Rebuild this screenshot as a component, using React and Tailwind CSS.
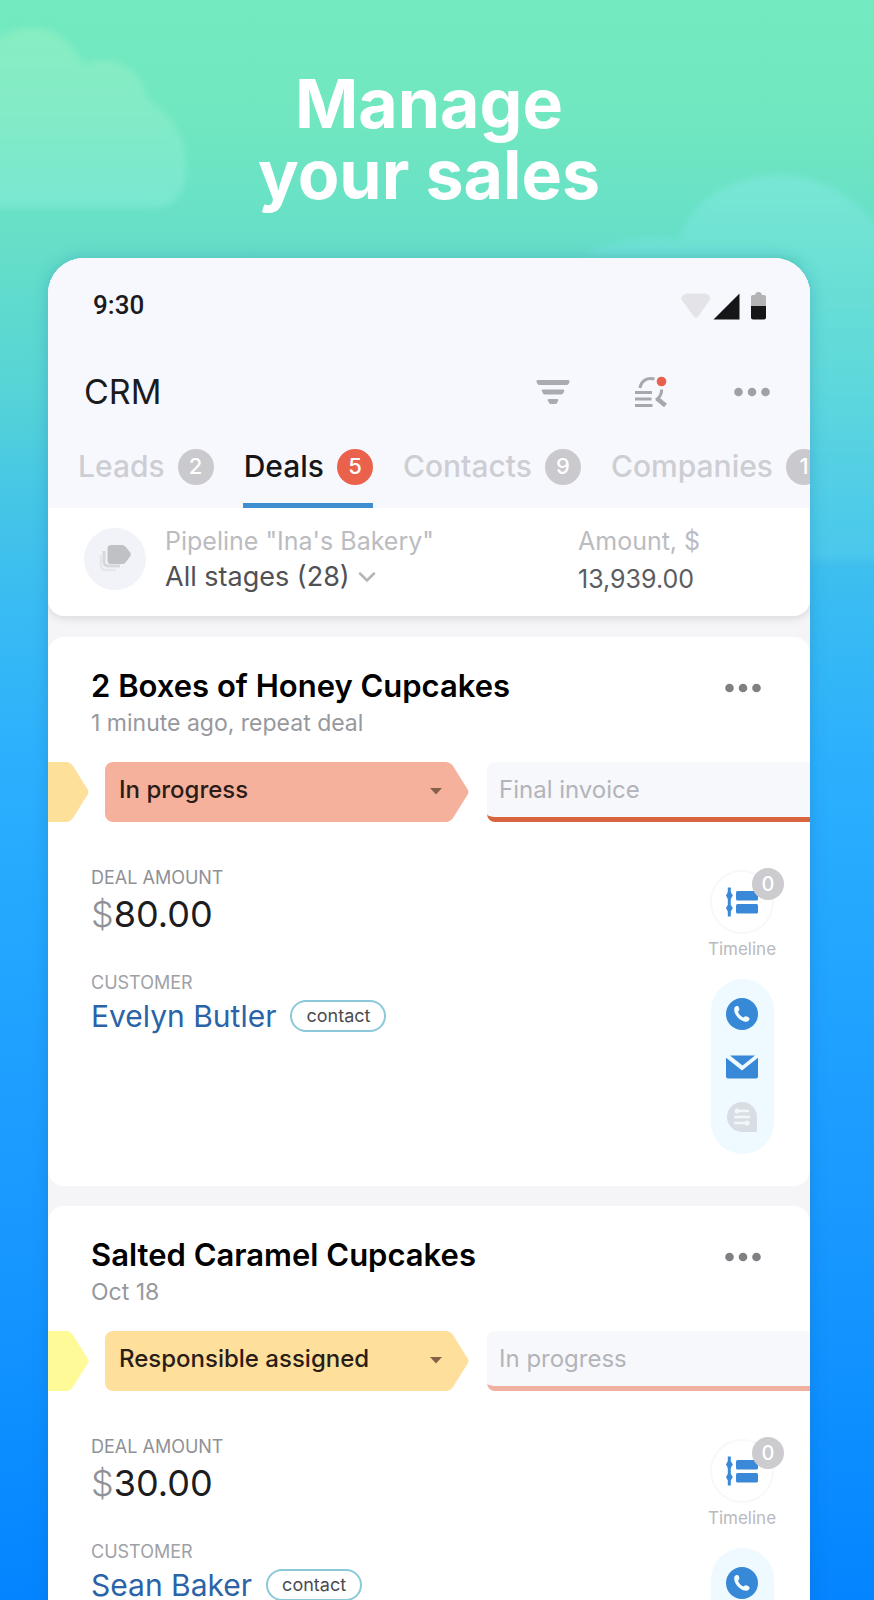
import React from "react";

const TABS = [
  { label: "Leads", count: 2 },
  { label: "Deals", count: 5, active: true },
  { label: "Contacts", count: 9 },
  { label: "Companies", count: 1 },
];

const DEALS = [
  {
    title: "2 Boxes of Honey Cupcakes",
    meta: "1 minute ago, repeat deal",
    stage: "In progress",
    next: "Final invoice",
    previousColor: "text-[#fde09a]",
    stageBg: "bg-[#f6b19d]",
    stageColor: "text-[#f6b19d]",
    line: "border-[#d9653f]",
    amount: "80.00",
    customer: "Evelyn Butler",
  },
  {
    title: "Salted Caramel Cupcakes",
    meta: "Oct 18",
    stage: "Responsible assigned",
    next: "In progress",
    previousColor: "text-[#fffa98]",
    stageBg: "bg-[#fee09c]",
    stageColor: "text-[#fee09c]",
    line: "border-[#efb0a0]",
    amount: "30.00",
    customer: "Sean Baker",
  },
];

function Sky() {
  return (
    <svg
      aria-hidden="true"
      className="absolute inset-x-0 top-0 h-[640px] w-full"
      viewBox="0 0 874 640"
      preserveAspectRatio="none"
    >
      <defs>
        <linearGradient id="cloud" x1="0" y1="0" x2="0" y2="1">
          <stop offset="0" stopColor="#a0f2c4" stopOpacity="0.45" />
          <stop offset="1" stopColor="#84ecd8" stopOpacity="0.6" />
        </linearGradient>
        <linearGradient id="hill" x1="0" y1="0" x2="0" y2="1">
          <stop offset="0" stopColor="#7fe8dc" stopOpacity="0.7" />
          <stop offset="0.3" stopColor="#6fe2de" stopOpacity="0.5" />
          <stop offset="1" stopColor="#55cfee" stopOpacity="0.5" />
        </linearGradient>
        <filter id="soft">
          <feGaussianBlur stdDeviation="3" />
        </filter>
      </defs>
      <path
        filter="url(#soft)"
        fill="url(#cloud)"
        d="M-10 45C8 26 44 22 62 38C74 48 80 58 84 64C116 52 142 70 148 100C170 112 186 136 186 166C186 194 174 208 152 208H-10Z"
      />
      <path
        filter="url(#soft)"
        fill="url(#hill)"
        d="M580 256C610 240 650 236 680 240C690 200 730 175 780 175C830 177 866 204 884 240V560H800V256Z"
      />
    </svg>
  );
}

function Dots() {
  return (
    <svg aria-hidden="true" viewBox="0 0 36 10" className="h-[10px] w-9" fill="currentColor">
      <circle cx="4.5" cy="5" r="4.3" />
      <circle cx="18" cy="5" r="4.3" />
      <circle cx="31.5" cy="5" r="4.3" />
    </svg>
  );
}

function StatusIcons() {
  return (
    <svg aria-hidden="true" viewBox="0 0 86 30" className="h-[30px] w-[86px]">
      <path d="M0 8Q1 3 6 2.500H24Q29 3 29.500 8L17.500 25Q15 28 12.500 25Z" fill="#e4e4e8" />
      <path d="M58.500 2.500V28.500H32.500Z" fill="#161618" />
      <path d="M70 15V6Q70 4 72 4H74Q74.500 1 77.500 1T81 4H83Q85 4 85 6V15Z" fill="#b3b3b6" />
      <path d="M70 15H85V26.500Q85 28.500 83 28.500H72Q70 28.500 70 26.500Z" fill="#161618" />
    </svg>
  );
}

function FilterIcon() {
  return (
    <svg aria-hidden="true" viewBox="0 0 34 26" className="h-[26px] w-[34px]" fill="#a9abb1">
      <path d="M2 1H32Q34 1 33.500 3L32.500 5Q32 6 30.500 6H3.500Q2 6 1.500 5L0.500 3Q0 1 2 1Z" />
      <path d="M7 10.500H27Q29 10.500 28 12.500L27 14.500Q26.500 15.500 25 15.500H9Q7.500 15.500 7 14.500L6 12.500Q5 10.500 7 10.500Z" />
      <path d="M13 20H21Q23 20 22 22L21 24Q20.500 25 19 25H15Q13.500 25 13 24L12 22Q11 20 13 20Z" />
    </svg>
  );
}

function SearchIcon() {
  return (
    <svg aria-hidden="true" viewBox="0 0 34 32" className="h-8 w-[34px]" fill="none" stroke="#a6a8af">
      <path d="M6 12C7 5 13 1 20.500 3" strokeWidth="3" />
      <path d="M1 16.500H18M1 23H17.500M1 29.500H18.500" strokeWidth="3" />
      <path d="M27.500 13.500C28 18 26 21 22 24" strokeWidth="3" />
      <path d="M23 22.500L31.500 29.500" strokeWidth="4.500" />
      <circle cx="27.500" cy="5.500" r="4.800" fill="#e9604f" stroke="none" />
    </svg>
  );
}

function StageStackIcon() {
  return (
    <svg aria-hidden="true" viewBox="0 0 34 30" className="h-[30px] w-[34px]">
      <path d="M3 11V22Q3 26 8 26H18" fill="none" stroke="#e6e7ec" strokeWidth="2.500" />
      <path d="M6 7V18Q6 22 11 22H22" fill="none" stroke="#d7d8dc" strokeWidth="3" />
      <path d="M13 1H24Q26 1 27.500 2.500L32.500 9Q33 10.500 32.500 12L27.500 18.500Q26 20 24 20H13Q9.500 20 9.500 16.500V4.500Q9.500 1 13 1Z" fill="#c0c1c5" />
    </svg>
  );
}

function TimelineIcon() {
  return (
    <svg aria-hidden="true" viewBox="0 0 32 30" className="h-[30px] w-8" fill="#3a89d8">
      <path d="M1.800 0.500H4.800V5L6.800 8.500L4.800 12V18L6.800 21L4.800 24.500V29.500H1.800V24.500L0 21L1.800 18V12L0 8.500L1.800 5Z" />
      <rect x="10" y="4" width="22" height="9.500" rx="1.500" />
      <rect x="10" y="17" width="22" height="9.500" rx="1.500" />
    </svg>
  );
}

function PhoneIcon() {
  return (
    <svg aria-hidden="true" viewBox="0 0 32 32" className="size-8">
      <circle cx="16" cy="16" r="16" fill="#3788d6" />
      <path
        fill="#f2fdff"
        d="M8.500 9.500C9 8.300 10.600 7.600 11.800 8C13 8.700 13.500 10.800 13.300 12C13 13 11.900 13.300 12.100 14.100C13 16.700 15 18.700 17.200 19.400C18 19.500 18.600 18.300 19.600 18.300C21.200 18.300 23.300 19.500 23.600 20.700C23.700 22.300 22 23.600 20.400 23.800C14.500 23.800 8 17 8.200 11.500C8.200 10.800 8.300 10 8.500 9.500Z"
      />
    </svg>
  );
}

function MailIcon() {
  return (
    <svg aria-hidden="true" viewBox="0 0 32 24" className="h-6 w-8" fill="#3788d6">
      <path d="M4 0.500H29L16.500 10.500Z" />
      <path d="M0 2.800L16 15.500L32 2.800V21.500Q32 23.500 30 23.500H2Q0 23.500 0 21.500Z" />
    </svg>
  );
}

function ChatIcon() {
  return (
    <svg aria-hidden="true" viewBox="0 0 32 32" className="size-8">
      <path d="M16 1A15 15 0 0 1 31 16V30Q31 31 30 31H16A15 15 0 0 1 16 1Z" fill="#d9dde4" />
      <circle cx="11" cy="10" r="2.500" fill="#f1f7fb" />
      <circle cx="21" cy="22" r="2.500" fill="#f1f7fb" />
      <path d="M11 10H22M9 16H23M9 22H21" stroke="#f1f7fb" strokeWidth="2.500" strokeLinecap="round" />
    </svg>
  );
}

function StageTip({ className = "" }) {
  return (
    <svg aria-hidden="true" viewBox="0 0 24 60" className={"h-[60px] w-6 shrink-0 " + className} fill="currentColor">
      <path d="M0 0H1Q5 0 8 4L23 28Q24 30 23 32L8 56Q5 60 1 60H0Z" />
    </svg>
  );
}

function DealCard({ deal }) {
  return (
    <article className="h-[549px] overflow-hidden rounded-2xl bg-white pt-[29px]">
      <header className="flex items-start justify-between pl-[43px] pr-[49px]">
        <div>
          <h2 className="text-[31px] font-semibold leading-10 text-black">{deal.title}</h2>
          <p className="text-[23px] leading-[34px] text-[#96989d]">{deal.meta}</p>
        </div>
        <button type="button" aria-label="Deal actions" className="flex h-11 items-center text-[#7f8084]">
          <Dots />
        </button>
      </header>

      <div className="mt-[22px] flex">
        <div className={"flex h-[60px] w-[41px] shrink-0 " + deal.previousColor}>
          <span className="flex-1 bg-current" />
          <StageTip />
        </div>
        <div className="ml-4 flex w-[364px] shrink-0">
          <div className={"relative flex flex-1 items-start rounded-l-lg " + deal.stageBg}>
            <select
              aria-label="Stage"
              defaultValue={deal.stage}
              className="h-[56px] w-full appearance-none bg-transparent pl-[14px] text-2xl font-medium text-[#2a1c17] outline-none"
            >
              <option>{deal.stage}</option>
              <option>{deal.next}</option>
            </select>
            <svg aria-hidden="true" viewBox="0 0 12 8" className="pointer-events-none absolute right-[3px] top-[25px] h-2 w-3">
              <path d="M0 1H12L6 7.500Z" fill="#866049" />
            </svg>
          </div>
          <StageTip className={deal.stageColor} />
        </div>
        <button
          type="button"
          className={"ml-[18px] flex h-[60px] min-w-0 flex-1 items-center rounded-l-lg border-b-[5px] bg-[#f7f8fc] pl-[12px] text-left text-2xl text-[#b3b4b9] " + deal.line}
        >
          {deal.next}
        </button>
      </div>

      <div className="flex items-start justify-between pl-[43px] pr-[28px] pt-[42px]">
        <dl>
          <dt className="text-lg leading-7 text-[#8f9196]">DEAL AMOUNT</dt>
          <dd className="text-[36px] leading-[44px] text-[#1d1d1f]">
            <span className="font-light text-[#8f9196]">$</span>
            {deal.amount}
          </dd>
          <dt className="mt-[33px] text-lg leading-7 text-[#a0a1a6]">CUSTOMER</dt>
          <dd className="flex items-center gap-[14px]">
            <a href="#customer" className="text-[30px] leading-[38px] text-[#2a63a8]">
              {deal.customer}
            </a>
            <span className="flex h-8 items-center rounded-full border-2 border-[#8bc8da] px-[14px] text-lg text-[#4b4c50]">
              contact
            </span>
          </dd>
        </dl>

        <div className="flex w-[80px] flex-col items-center">
          <button type="button" className="flex flex-col items-center text-[17px] leading-6 text-[#b9bac0]">
            <span className="relative mt-[6px] flex size-16 items-center justify-center rounded-full border-2 border-[#f8f8fa]">
              <TimelineIcon />
              <span className="absolute -right-3 -top-1 flex size-8 items-center justify-center rounded-full bg-[#cbcbd0] text-[20px] font-medium text-white">
                0
              </span>
            </span>
            <span className="mt-[3px]">Timeline</span>
          </button>
          <div className="mt-[18px] flex h-[175px] w-[63px] flex-col items-center rounded-full bg-[#eefaff] pt-[19px]">
            <button type="button" aria-label="Call">
              <PhoneIcon />
            </button>
            <button type="button" aria-label="Send mail" className="mt-[25px]">
              <MailIcon />
            </button>
            <button type="button" aria-label="Chat" className="mt-[22px]">
              <ChatIcon />
            </button>
          </div>
        </div>
      </div>
    </article>
  );
}

export default function App() {
  return (
    <div className="relative h-screen overflow-hidden bg-[linear-gradient(180deg,#74eac0_0px,#70e7c0_120px,#66dfc8_240px,#56d4d6_390px,#45c6e6_500px,#3abcf2_600px,#2cb0fd_760px,#22a6ff_950px,#1a99ff_1200px,#0e90ff_1400px,#0484ff_1600px)] font-[Inter,sans-serif]">
      <Sky />
      <main className="relative">
        <h1 className="pr-[16px] pt-[68px] text-center text-[68px] font-bold leading-[71px] text-white">
          Manage
          <br />
          your sales
        </h1>

        <section className="ml-12 mr-16 mt-[48px] overflow-hidden rounded-t-[36px] bg-[#f5f5f7] shadow-[0_0_16px_rgba(20,90,150,0.25)]">
          <div className="overflow-hidden rounded-b-2xl bg-white shadow-[0_2px_8px_rgba(60,60,90,0.16)]">
            <div className="bg-[#f7f8fd]">
              <div className="flex h-[63px] items-end justify-between pl-[45px] pr-[43px]">
                <time className="font-[Roboto,sans-serif] text-[26px] font-medium leading-8 text-[#1b1b1d]">9:30</time>
                <StatusIcons />
              </div>

              <div className="flex items-center justify-between pl-[36px] pr-[40px] pt-[47px]">
                <h2 className="text-[34px] leading-[48px] text-[#1b1b1d]">CRM</h2>
                <div className="flex items-center">
                  <button type="button" aria-label="Filter">
                    <FilterIcon />
                  </button>
                  <button type="button" aria-label="Search" className="ml-[64px]">
                    <SearchIcon />
                  </button>
                  <button type="button" aria-label="More" className="ml-[66px] text-[#a0a1a8]">
                    <Dots />
                  </button>
                </div>
              </div>

              <div role="tablist" className="flex h-[92px] items-stretch gap-[29px] overflow-hidden pl-[29px] pt-[11px]">
                {TABS.map((tab) => (
                  <button
                    key={tab.label}
                    type="button"
                    role="tab"
                    aria-selected={Boolean(tab.active)}
                    className={
                      "flex shrink-0 items-center gap-[13px] border-b-[5px] pl-px pt-[3px] text-[30px] font-medium " +
                      (tab.active ? "border-[#3f8ed0] text-[#161618]" : "border-transparent text-[#cdced3]")
                    }
                  >
                    {tab.label}
                    <span
                      className={
                        "flex size-9 items-center justify-center rounded-full text-[22px] text-white " +
                        (tab.active ? "bg-[#ea614c]" : "bg-[#c9c9ce]")
                      }
                    >
                      {tab.count}
                    </span>
                  </button>
                ))}
              </div>
            </div>

            <div className="flex h-[108px] items-start pl-[36px] pt-[15px]">
              <span className="mt-[5px] flex size-[62px] shrink-0 items-center justify-center rounded-full bg-[#f2f3f8]">
                <StageStackIcon />
              </span>
              <div className="ml-[19px] flex-1 whitespace-nowrap">
                <label htmlFor="pipeline" className="block text-[25px] leading-9 text-[#bbbcc0]">
                  Pipeline "Ina's Bakery"
                </label>
                <div className="flex items-center gap-2">
                  <select
                    id="pipeline"
                    defaultValue="All stages (28)"
                    className="field-sizing-content appearance-none bg-transparent text-[27px] leading-9 text-[#505155] outline-none"
                  >
                    <option>All stages (28)</option>
                  </select>
                  <svg aria-hidden="true" viewBox="0 0 18 12" className="pointer-events-none h-3 w-[18px]" fill="none" stroke="#b4b5ba" strokeWidth="2.500" strokeLinecap="round">
                    <path d="M2 2.500L9 9.500L16 2.500" />
                  </svg>
                </div>
              </div>
              <div className="w-[232px] shrink-0 leading-9">
                <p className="text-[25px] text-[#bbbcc0]">Amount, $</p>
                <p className="pt-[2px] text-[25px] text-[#5b5c60]">13,939.00</p>
              </div>
            </div>
          </div>

          <div className="flex flex-col gap-5 pt-[21px]">
            {DEALS.map((deal) => (
              <DealCard key={deal.title} deal={deal} />
            ))}
          </div>
        </section>
      </main>
    </div>
  );
}
